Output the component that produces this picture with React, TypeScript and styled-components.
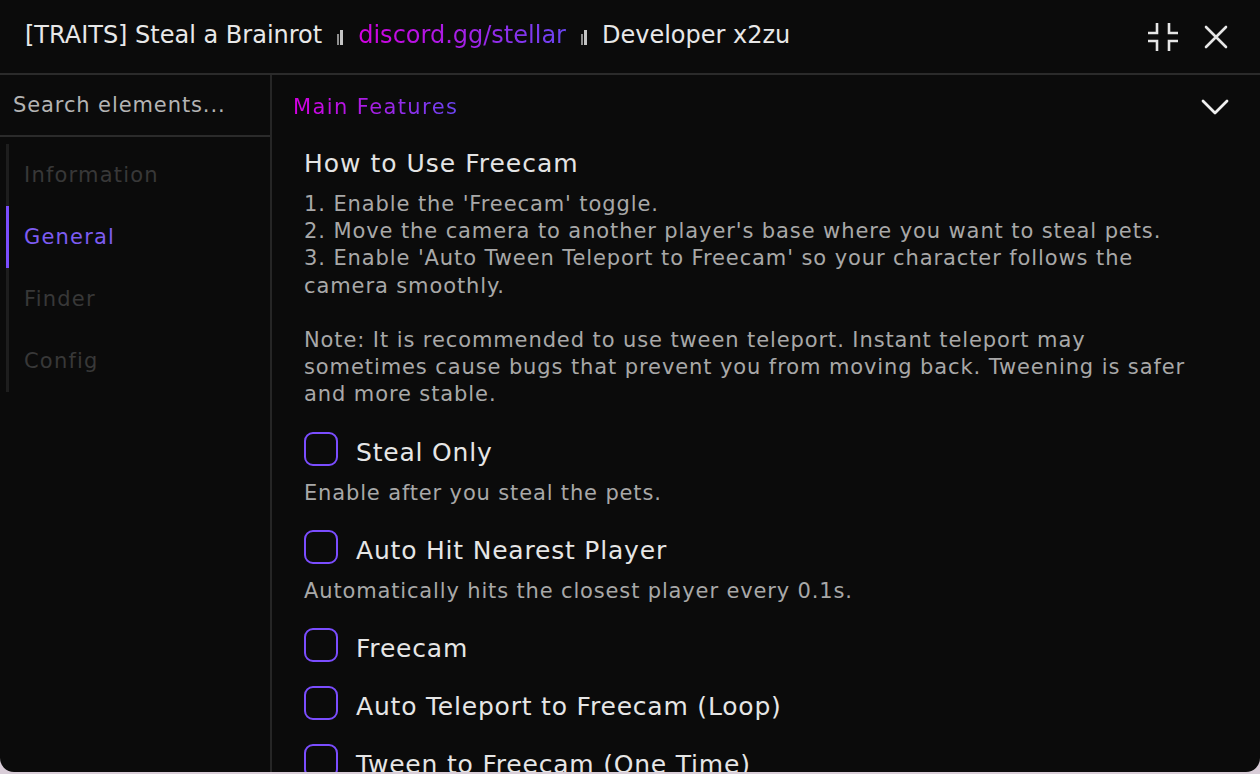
import React, { useState } from "react";
import styled, { createGlobalStyle } from "styled-components";

const GlobalStyle = createGlobalStyle`
  html, body {
    margin: 0;
    padding: 0;
    background: #d9cdd8;
  }
  body {
    font-family: "DejaVu Sans", "Noto Sans", sans-serif;
  }
  * {
    box-sizing: border-box;
  }
`;

const navItems = ["Information", "General", "Finder", "Config"];

interface ToggleItem {
  label: string;
  desc?: string;
}

const toggles: ToggleItem[] = [
  { label: "Steal Only", desc: "Enable after you steal the pets." },
  {
    label: "Auto Hit Nearest Player",
    desc: "Automatically hits the closest player every 0.1s.",
  },
  { label: "Freecam" },
  { label: "Auto Teleport to Freecam (Loop)" },
  { label: "Tween to Freecam (One Time)" },
];

const App: React.FC = () => {
  const [active, setActive] = useState<string>("General");
  const [checked, setChecked] = useState<Record<string, boolean>>({});

  const toggle = (label: string) => {
    setChecked({ ...checked, [label]: !checked[label] });
  };

  return (
    <>
      <GlobalStyle />
      <Window>
        <Header>
          <Title>
            [TRAITS] Steal a Brainrot
            <Sep>
              <Bar short />
              <Bar />
            </Sep>
            <Gradient>discord.gg/stellar</Gradient>
            <Sep>
              <Bar short />
              <Bar />
            </Sep>
            Developer x2zu
          </Title>
          <HeaderButtons>
            <IconButton>
              <svg width="30" height="30" viewBox="0 0 30 30" fill="none">
                <path
                  d="M9 1v10H0M21 1v10h9M9 29v-10H0M21 29v-10h9"
                  stroke="#e6e6e6"
                  strokeWidth="2.6"
                />
              </svg>
            </IconButton>
            <IconButton>
              <svg width="24" height="24" viewBox="0 0 24 24" fill="none">
                <path
                  d="M2 2l20 20M22 2L2 22"
                  stroke="#e6e6e6"
                  strokeWidth="2.6"
                  strokeLinecap="round"
                />
              </svg>
            </IconButton>
          </HeaderButtons>
        </Header>

        <Body>
          <Sidebar>
            <Search placeholder="Search elements..." />
            <Nav>
              {navItems.map((item) => (
                <NavItem
                  key={item}
                  $active={item === active}
                  onClick={() => setActive(item)}
                >
                  {item}
                </NavItem>
              ))}
            </Nav>
          </Sidebar>

          <Main>
            <SectionHeader>
              <Gradient>Main Features</Gradient>
              <svg width="30" height="18" viewBox="0 0 30 18" fill="none">
                <path
                  d="M3 3l12 12L27 3"
                  stroke="#f0f0f0"
                  strokeWidth="2.8"
                  strokeLinecap="round"
                  strokeLinejoin="round"
                />
              </svg>
            </SectionHeader>

            <Content>
              <Heading>How to Use Freecam</Heading>
              <Paragraph>
                1. Enable the 'Freecam' toggle.
                <br />
                2. Move the camera to another player's base where you want to
                steal pets.
                <br />
                3. Enable 'Auto Tween Teleport to Freecam' so your character
                follows the camera smoothly.
                <br />
                <br />
                Note: It is recommended to use tween teleport. Instant teleport
                may sometimes cause bugs that prevent you from moving back.
                Tweening is safer and more stable.
              </Paragraph>

              {toggles.map((t) => (
                <ToggleBlock key={t.label}>
                  <ToggleRow onClick={() => toggle(t.label)}>
                    <Checkbox $on={!!checked[t.label]} />
                    <ToggleLabel>{t.label}</ToggleLabel>
                  </ToggleRow>
                  {t.desc && <ToggleDesc>{t.desc}</ToggleDesc>}
                </ToggleBlock>
              ))}
            </Content>
          </Main>
        </Body>
      </Window>
    </>
  );
};

const Window = styled.div`
  width: 1260px;
  height: 772px;
  background: #0b0b0b;
  border-radius: 0 0 14px 14px;
  display: flex;
  flex-direction: column;
  overflow: hidden;
`;

const Header = styled.div`
  height: 75px;
  flex-shrink: 0;
  display: flex;
  align-items: center;
  justify-content: space-between;
  padding: 0 32px 0 25px;
  border-bottom: 2px solid #2b2b2b;
`;

const Title = styled.div`
  display: flex;
  align-items: center;
  color: #e8e8e8;
  font-size: 24px;
  white-space: nowrap;
  margin-top: -4px;
`;

const Gradient = styled.span`
  background: linear-gradient(90deg, #d200e0 0%, #a520e6 50%, #6a45f2 100%);
  -webkit-background-clip: text;
  background-clip: text;
  color: transparent;
`;

const Sep = styled.span`
  display: inline-flex;
  align-items: flex-end;
  gap: 1px;
  margin: 4px 15px 0;
  height: 16px;
`;

const Bar = styled.span<{ short?: boolean }>`
  display: block;
  width: ${(p) => (p.short ? "2px" : "3px")};
  height: ${(p) => (p.short ? "11px" : "15px")};
  background: ${(p) => (p.short ? "#8f8f8f" : "#c4c4c4")};
`;

const HeaderButtons = styled.div`
  display: flex;
  align-items: center;
  gap: 26px;
`;

const IconButton = styled.button`
  background: none;
  border: none;
  padding: 0;
  display: flex;
  align-items: center;
  cursor: pointer;
`;

const Body = styled.div`
  flex: 1;
  display: flex;
  min-height: 0;
`;

const Sidebar = styled.div`
  width: 272px;
  flex-shrink: 0;
  border-right: 2px solid #262626;
  display: flex;
  flex-direction: column;
`;

const Search = styled.input`
  height: 62px;
  flex-shrink: 0;
  background: transparent;
  border: none;
  border-bottom: 2px solid #2b2b2b;
  padding: 0 13px;
  font-family: inherit;
  font-size: 21px;
  letter-spacing: 0.9px;
  color: #ddd;
  outline: none;

  &::placeholder {
    color: #b4b4b4;
  }
`;

const Nav = styled.div`
  margin: 7px 0 0 6px;
  border-left: 3px solid #1e1e1e;
  display: flex;
  flex-direction: column;
`;

const NavItem = styled.div<{ $active?: boolean }>`
  height: 62px;
  display: flex;
  align-items: center;
  margin-left: -3px;
  padding-left: 15px;
  border-left: 3px solid ${(p) => (p.$active ? "#7b4dff" : "transparent")};
  font-size: 21px;
  letter-spacing: 1.2px;
  color: ${(p) => (p.$active ? "#7d5cf2" : "#383838")};
  cursor: pointer;
`;

const Main = styled.div`
  flex: 1;
  overflow: hidden;
  display: flex;
  flex-direction: column;
`;

const SectionHeader = styled.div`
  height: 64px;
  flex-shrink: 0;
  display: flex;
  align-items: center;
  justify-content: space-between;
  padding: 0 30px 0 21px;
  font-size: 21px;
  letter-spacing: 1.4px;
`;

const Content = styled.div`
  padding: 0 50px 0 32px;
`;

const Heading = styled.div`
  font-size: 25px;
  letter-spacing: 1px;
  color: #e4e4e4;
  line-height: 30px;
  margin-top: 10px;
`;

const Paragraph = styled.div`
  font-size: 21px;
  letter-spacing: 0.9px;
  line-height: 27.2px;
  color: #a8a8a8;
  margin-top: 12px;
`;

const ToggleBlock = styled.div`
  margin-top: 23px;
`;

const ToggleRow = styled.div`
  display: flex;
  align-items: center;
  gap: 18px;
  cursor: pointer;
`;

const Checkbox = styled.div<{ $on?: boolean }>`
  width: 34px;
  height: 34px;
  border: 2px solid #7b4dff;
  border-radius: 9px;
  background: ${(p) => (p.$on ? "#7b4dff" : "transparent")};
  flex-shrink: 0;
`;

const ToggleLabel = styled.div`
  font-size: 25px;
  letter-spacing: 0.8px;
  color: #e6e6e6;
  margin-top: 6px;
  white-space: nowrap;
`;

const ToggleDesc = styled.div`
  font-size: 21px;
  letter-spacing: 0.85px;
  color: #a8a8a8;
  margin-top: 13px;
  line-height: 27px;
`;

export default App;
